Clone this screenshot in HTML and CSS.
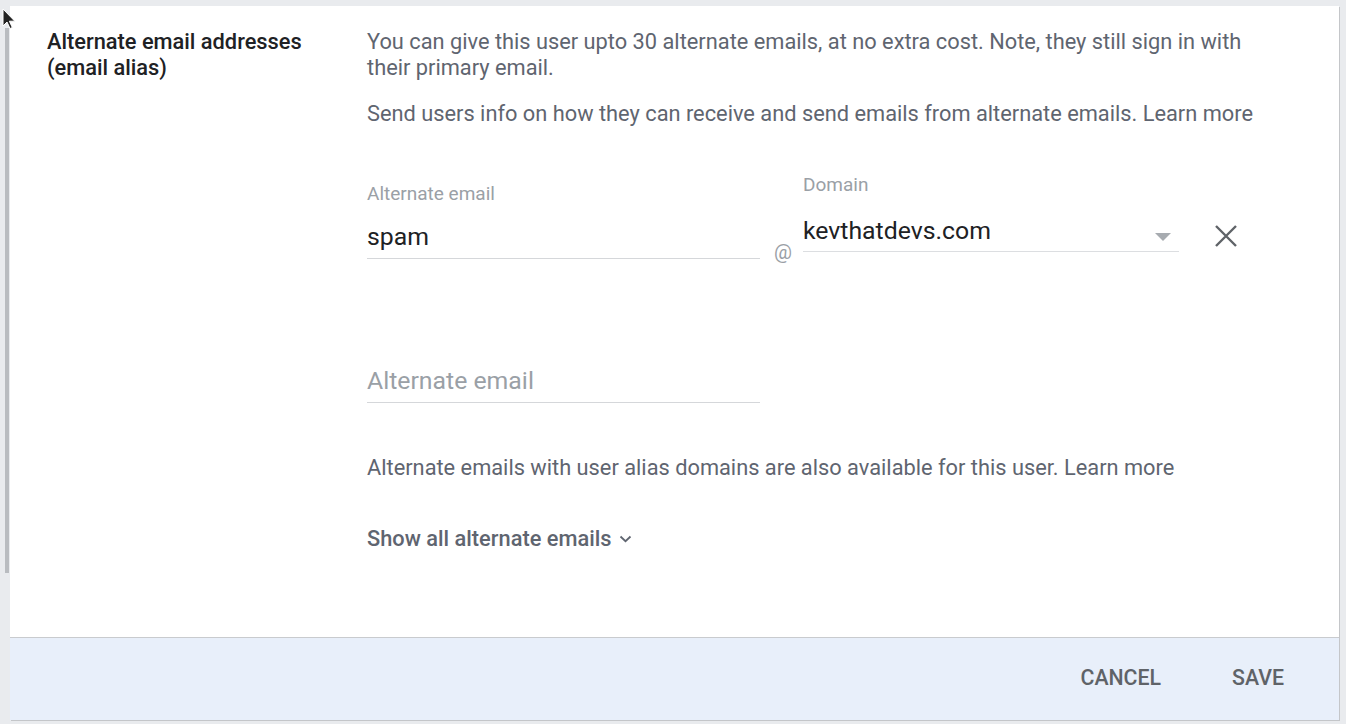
FILE: index.html
```html
<!DOCTYPE html>
<html lang="en">
<head>
<meta charset="utf-8">
<title>Alternate email addresses</title>
<link rel="stylesheet" href="styles.css">
</head>
<body>
<svg class="cursor" width="14" height="22" viewBox="0 0 14 22"><path d="M1 1 L1 18 L5 14 L8 20.5 L10.3 19.5 L7.4 13.2 L12.8 13.2 Z" fill="#222" stroke="#fff" stroke-width="1"/></svg>
<div class="side-rail"></div>
<div class="card">
  <div class="content">
    <div class="label-col">Alternate email addresses<br>(email alias)</div>
    <div class="main-col">
      <p class="desc">You can give this user upto 30 alternate emails, at no extra cost. Note, they still sign in with their primary email.</p>
      <p class="desc desc-second">Send users info on how they can receive and send emails from alternate emails. <a class="link" href="#">Learn more</a></p>

      <div class="alias-row">
        <div class="field email-field">
          <div class="field-label">Alternate email</div>
          <div class="field-input">spam</div>
        </div>
        <div class="at">@</div>
        <div class="field domain-field">
          <div class="field-label">Domain</div>
          <div class="field-select"><span>kevthatdevs.com</span><span class="caret"></span></div>
        </div>
        <button class="remove" aria-label="Remove">
          <svg width="24" height="24" viewBox="0 0 24 24"><path d="M2 2 L22 22 M22 2 L2 22" stroke="#5f6368" stroke-width="2.4" fill="none"/></svg>
        </button>
      </div>

      <div class="field email-field empty-field">
        <div class="field-input placeholder">Alternate email</div>
      </div>

      <p class="desc desc-alias">Alternate emails with user alias domains are also available for this user. <a class="link" href="#">Learn more</a></p>

      <button class="show-all">Show all alternate emails
        <svg width="13" height="8" viewBox="0 0 13 8"><path d="M1.5 1.5 L6.5 6.2 L11.5 1.5" stroke="#5f6570" stroke-width="1.8" fill="none"/></svg>
      </button>
    </div>
  </div>
  <div class="footer">
    <button class="action">CANCEL</button>
    <button class="action">SAVE</button>
  </div>
</div>
</body>
</html>
```

FILE: styles.css
```css
html, body {
  margin: 0;
  padding: 0;
}

body {
  background: #e9ebee;
  font-family: Roboto, "Liberation Sans", Arial, sans-serif;
  width: 1346px;
  height: 724px;
  overflow: hidden;
  box-sizing: border-box;
  padding: 6px 7px 4px 10px;
  position: relative;
}

.cursor {
  position: absolute;
  left: 2px;
  top: 8px;
  z-index: 2;
}

.side-rail {
  position: absolute;
  left: 5px;
  top: 28px;
  width: 4px;
  height: 545px;
  background: #b9bcc0;
}

.card {
  background: #ffffff;
  height: 714px;
  display: flex;
  flex-direction: column;
  box-shadow: 1px 1px 0 #c4c6c9;
}

.content {
  flex: 1;
  display: flex;
  padding: 23px 0 0 37px;
}

.label-col {
  width: 320px;
  font-size: 21.8px;
  line-height: 26px;
  font-weight: 500;
  color: #202124;
}

.main-col {
  flex: 1;
}

.desc {
  margin: 0;
  font-size: 21.8px;
  line-height: 26px;
  color: #5f6570;
  max-width: 900px;
}

.desc-second {
  margin-top: 20px;
}

.link {
  color: #5f6570;
  text-decoration: none;
}

.alias-row {
  display: flex;
  align-items: flex-start;
  margin-top: 48px;
}

.field-label {
  font-size: 19px;
  line-height: 20px;
  color: #9aa0a6;
}

.email-field {
  width: 393px;
  padding-top: 9px;
}

.field-input {
  font-size: 24.8px;
  line-height: 30px;
  color: #202124;
  padding-top: 18px;
  padding-bottom: 6px;
  border-bottom: 1px solid #d5d7da;
}

.at {
  width: 43px;
  box-sizing: border-box;
  padding-left: 14px;
  padding-top: 67px;
  font-size: 20px;
  line-height: 20px;
  color: #9aa0a6;
}

.domain-field {
  width: 376px;
}

.field-select {
  display: flex;
  align-items: center;
  justify-content: space-between;
  font-size: 24.8px;
  line-height: 30px;
  color: #202124;
  padding-top: 21px;
  padding-bottom: 5px;
  border-bottom: 1px solid #dcdee1;
}

.caret {
  width: 0;
  height: 0;
  border-left: 8px solid transparent;
  border-right: 8px solid transparent;
  border-top: 8px solid #a7abb0;
  margin-right: 8px;
  margin-top: 12px;
}

.remove {
  background: none;
  border: none;
  padding: 0;
  margin-left: 34px;
  margin-top: 48px;
  width: 26px;
  height: 26px;
  display: flex;
  align-items: center;
  justify-content: center;
  cursor: pointer;
}

.empty-field {
  margin-top: 104px;
  padding-top: 0;
}

.placeholder {
  color: #9aa0a6;
  padding-top: 0;
}

.desc-alias {
  margin-top: 52px;
}

.show-all {
  margin-top: 45px;
  background: none;
  border: none;
  padding: 0;
  font-family: inherit;
  font-size: 21.8px;
  line-height: 26px;
  font-weight: 500;
  color: #5f6570;
  display: flex;
  align-items: center;
  gap: 8px;
  cursor: pointer;
}

.footer {
  height: 83px;
  box-sizing: border-box;
  border-top: 1px solid #c9cbce;
  background: #e8effa;
  display: flex;
  align-items: center;
  justify-content: flex-end;
  gap: 71px;
  padding-right: 55px;
  padding-bottom: 4px;
}

.action {
  background: none;
  border: none;
  padding: 0;
  font-family: inherit;
  font-size: 21.3px;
  font-weight: 500;
  color: #5f6368;
  cursor: pointer;
}
```
